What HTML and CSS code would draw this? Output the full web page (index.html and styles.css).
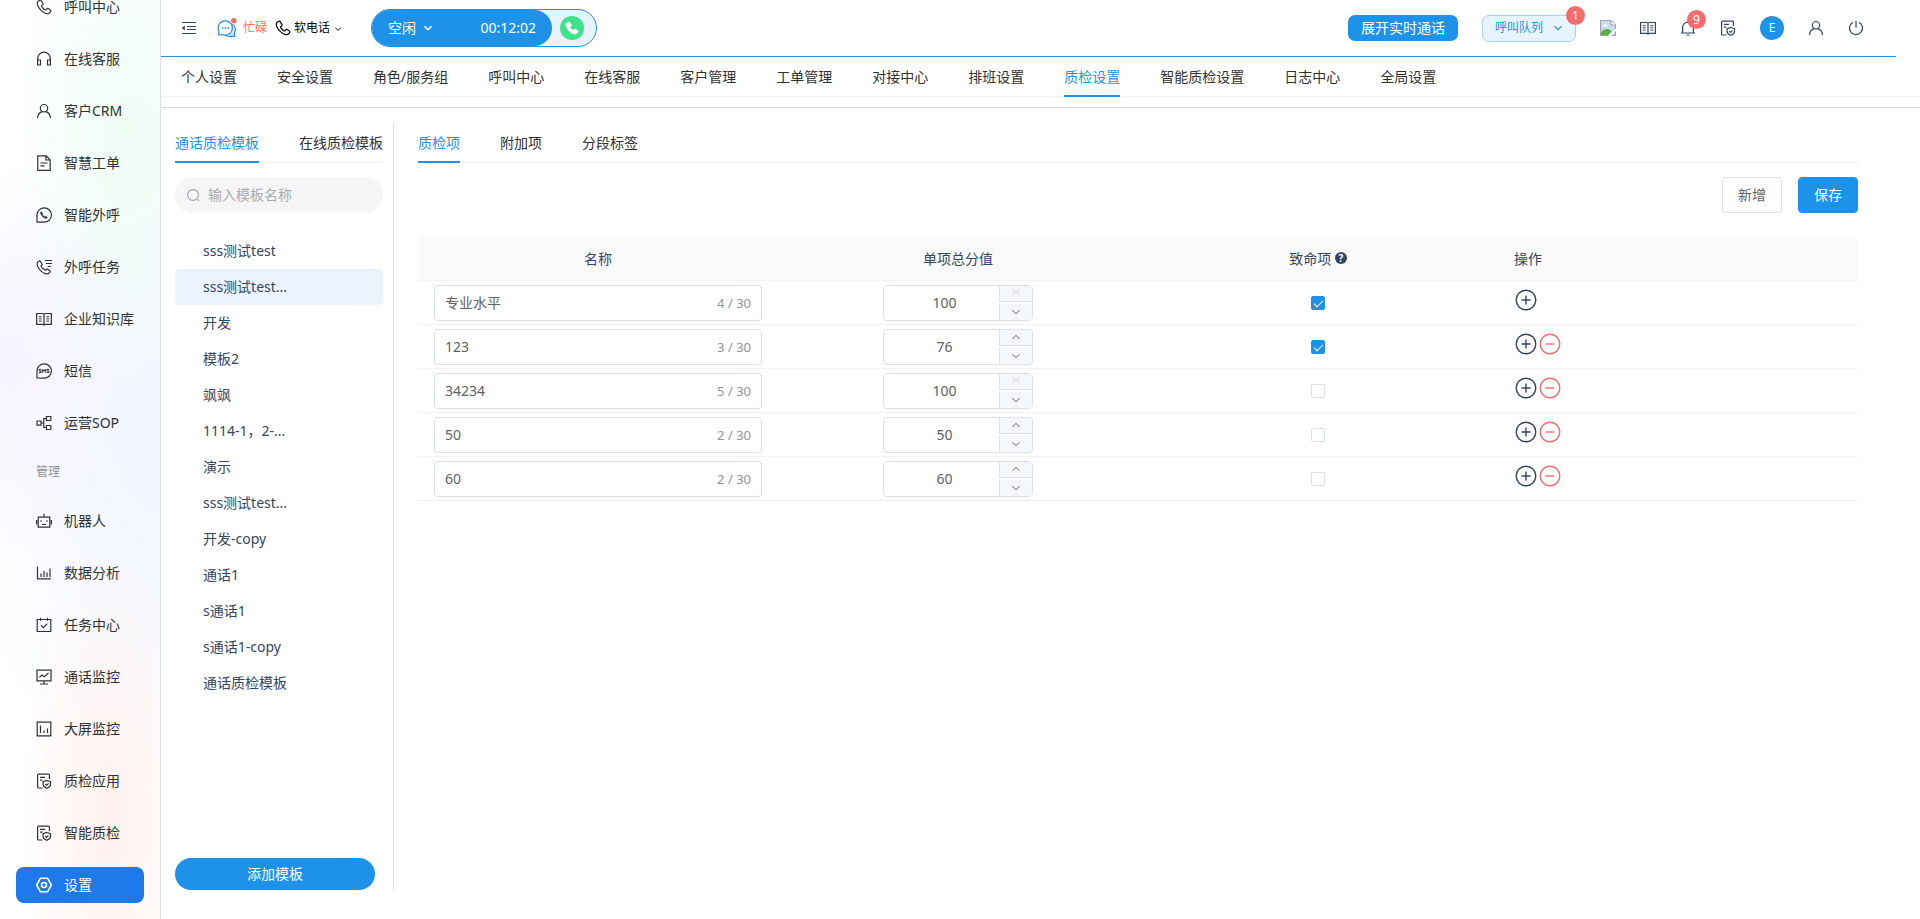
FILE: index.html
```html
<!DOCTYPE html>
<html lang="zh-CN">
<head>
  <meta charset="UTF-8">
  <title>质检设置</title>
  <meta name="viewport" content="width=device-width, initial-scale=1.0">
  <link rel="stylesheet" href="styles.css">
</head>
<body>
  <!-- 图标 -->
  <svg class="sprite" aria-hidden="true">
    <symbol id="i-phone" viewBox="0 0 16 16"><path d="M3.600 1.400 1.900 2.600C1 3.300 1.100 5 2 6.900c.8 1.700 2.100 3.500 3.700 5 1.500 1.400 3.300 2.500 5 2.800 1.300.2 2.400-.1 3.100-1l.8-1.100c.4-.5.3-1.100-.2-1.500l-2-1.500c-.5-.4-1.100-.3-1.500.2l-.7.9c-.3.3-.7.4-1.100.2C7.700 10.200 6.500 9 5.700 7.600c-.2-.4-.1-.8.2-1.100l.8-.6c.5-.4.6-1 .2-1.500L5.200 1.700c-.4-.5-1.100-.6-1.600-.3z"/></symbol>
    <symbol id="i-headset" viewBox="0 0 16 16"><path d="M1.600 14V7.600a6.400 6.400 0 0 1 12.800 0V14M1.600 9h2.900v5H1.600zM11.500 9h2.900v5h-2.900z"/></symbol>
    <symbol id="i-user" viewBox="0 0 16 16"><circle cx="8" cy="5.200" r="3.700"/><path d="M1.500 15c.2-3.300 2-5.500 4.500-6.400M14.500 15c-.2-3.300-2-5.500-4.500-6.400"/></symbol>
    <symbol id="i-file" viewBox="0 0 16 16"><path d="M1.800.8h8.500L14.200 5v10.300H1.800zM9.900.8V5h4.300M4.500 8h7M4.500 10.800h4"/></symbol>
    <symbol id="i-whats" viewBox="0 0 16 16"><path d="M1 15.200V8a7.200 7.200 0 1 1 7 7.200z"/><path d="m5.300 4.600-.8.900c.2 2.700 3.200 5.700 6 5.900l.9-.8-1.700-1.300-.9.500C7.500 9.400 6.800 8.700 6.200 7.400l.5-.9z" fill="currentColor" stroke-width=".6"/></symbol>
    <symbol id="i-calllist" viewBox="0 0 16 16"><path d="M9 1.500h7M9.800 4.500H16M11.800 7.500H15"/><path d="m3 2.200-1.300.9C.2 5 1.900 9 4.800 11.900c2.900 2.700 6.600 3.900 8.300 2.100l.9-1.100c.3-.4.2-.9-.2-1.200l-1.900-1.500c-.4-.3-.9-.2-1.200.2l-.7.7C8.100 10.900 5.500 8.600 5 6.900l.8-.7c.4-.3.5-.8.2-1.200L4.300 2.400C4 2 3.400 1.900 3 2.200z"/></symbol>
    <symbol id="i-book" viewBox="0 0 16 16"><path d="M.6 2.500h6L8 3.300l1.400-.8h6v10.800h-6l-1.400.8-1.400-.8h-6zM8 3.300v10.500"/><path d="M2.800 5.700h2.800M2.800 7.900h2.800M2.800 10.100h2.800M10.400 5.700h2.800M10.400 7.900h2.800M10.400 10.100h2.800" stroke-width="1"/></symbol>
    <symbol id="i-sms" viewBox="0 0 16 16"><path d="M1 15V8a7.200 7.200 0 1 1 7 7.200z"/><path d="M5.300 6.400H3.200v1.500h2v1.600H3M6.700 9.700V6.300L8 8.200l1.300-1.900v3.400M13 6.400h-2.100v1.500h2v1.600h-2.200" stroke-width="1"/></symbol>
    <symbol id="i-sop" viewBox="0 0 16 16"><path d="M1 6h4v4.200H1zM10.400 1.500h4.400v4h-4.400zM10.400 10.500h4.400v4h-4.400zM5 8h2.600M10.400 3.500H7.700v9h2.700"/></symbol>
    <symbol id="i-robot" viewBox="0 0 16 16"><path d="M2.200 4.200h11.600v10H2.200zM8 4V.8M.6 7v4.500M15.400 7v4.500M5 7.200v1.500M11 7.200v1.500M6 11.500h4"/></symbol>
    <symbol id="i-chart" viewBox="0 0 16 16"><path d="M1.500 1.500v12.300h13.300M5 12V8.500M8 12V6M11 12V7.500M14 12V3.500"/></symbol>
    <symbol id="i-task" viewBox="0 0 16 16"><path d="M1.200 2.500h13.600v12H1.200zM4.500.8v3M11.500.8v3M5 8.400l2.300 2.300 4-4"/></symbol>
    <symbol id="i-monitor" viewBox="0 0 16 16"><path d="M1 1.200h14v10.600H1zM8 12v3M4 15h8M3.500 8.300 6 6l2.300 1.800L12.500 4"/></symbol>
    <symbol id="i-screen" viewBox="0 0 16 16"><path d="M1.200 1.200h13.600v13.600H1.200zM4.500 4.500V12M8 9.500V12M11.500 7.500V12"/></symbol>
    <symbol id="i-check" viewBox="0 0 16 16"><path d="M6.500 15H2.500C1.900 15 1.600 14.700 1.600 14.100V2.100c0-.6.3-.9.900-.9h10c.6 0 .9.3.9.900V6M4 4.300h5M4 7.200h2.400"/><path d="m10.800 7.500 3.700 1.200v2.700c0 1.800-1.700 3.100-3.700 3.900-2-.8-3.700-2.100-3.700-3.900V8.700zM9.200 11.200l1.300 1.300 2-2.200"/></symbol>
    <symbol id="i-setting" viewBox="0 0 16 16"><path d="M4.500 1.200h7L15.300 8l-3.800 6.800h-7L.7 8z"/><circle cx="8" cy="8" r="2.500"/></symbol>
    <symbol id="i-fold" viewBox="0 0 16 16"><path d="M1 2.500h14M6 6.500h9M6 9.500h9M1 13.500h14"/><path d="M3.800 5.500v5L.8 8z" fill="currentColor" stroke="none"/></symbol>
    <symbol id="i-down" viewBox="0 0 10 10"><path d="m1.500 3.200 3.500 3.500 3.500-3.500"/></symbol>
    <symbol id="i-up" viewBox="0 0 10 10"><path d="M1.500 6.800 5 3.300l3.500 3.500"/></symbol>
    <symbol id="i-search" viewBox="0 0 14 14"><circle cx="6.500" cy="6.500" r="5.800"/><path d="m10.800 10.800 2.200 2.200"/></symbol>
    <symbol id="i-bell" viewBox="0 0 16 16"><path d="M.8 13h14.400M2.600 13V7.500a5.400 5.400 0 0 1 10.800 0V13M8 2V.8M6.500 15h3"/></symbol>
    <symbol id="i-power" viewBox="0 0 16 16"><path d="M5 2.300a6.500 6.500 0 1 0 6 0M8 .8v7"/></symbol>
    <symbol id="i-plus" viewBox="0 0 22 22"><circle cx="11" cy="11" r="9.800"/><path d="M11 6.500v9M6.500 11h9"/></symbol>
    <symbol id="i-minus" viewBox="0 0 22 22"><circle cx="11" cy="11" r="9.800"/><path d="M6.500 11h9"/></symbol>
  </svg>

  <!-- 左侧菜单 -->
  <aside class="sidebar">
    <a href="#" class="menu-item"><svg class="icon"><use href="#i-phone"/></svg>呼叫中心</a>
    <a href="#" class="menu-item"><svg class="icon"><use href="#i-headset"/></svg>在线客服</a>
    <a href="#" class="menu-item"><svg class="icon"><use href="#i-user"/></svg>客户CRM</a>
    <a href="#" class="menu-item"><svg class="icon"><use href="#i-file"/></svg>智慧工单</a>
    <a href="#" class="menu-item"><svg class="icon"><use href="#i-whats"/></svg>智能外呼</a>
    <a href="#" class="menu-item"><svg class="icon"><use href="#i-calllist"/></svg>外呼任务</a>
    <a href="#" class="menu-item"><svg class="icon"><use href="#i-book"/></svg>企业知识库</a>
    <a href="#" class="menu-item"><svg class="icon"><use href="#i-sms"/></svg>短信</a>
    <a href="#" class="menu-item"><svg class="icon"><use href="#i-sop"/></svg>运营SOP</a>
    <div class="menu-group">管理</div>
    <a href="#" class="menu-item"><svg class="icon"><use href="#i-robot"/></svg>机器人</a>
    <a href="#" class="menu-item"><svg class="icon"><use href="#i-chart"/></svg>数据分析</a>
    <a href="#" class="menu-item"><svg class="icon"><use href="#i-task"/></svg>任务中心</a>
    <a href="#" class="menu-item"><svg class="icon"><use href="#i-monitor"/></svg>通话监控</a>
    <a href="#" class="menu-item"><svg class="icon"><use href="#i-screen"/></svg>大屏监控</a>
    <a href="#" class="menu-item"><svg class="icon"><use href="#i-check"/></svg>质检应用</a>
    <a href="#" class="menu-item"><svg class="icon"><use href="#i-check"/></svg>智能质检</a>
    <a href="#" class="menu-item active"><svg class="icon"><use href="#i-setting"/></svg>设置</a>
  </aside>

  <div class="main">
    <!-- 顶部工具栏 -->
    <header class="header">
      <button class="icon-btn" aria-label="收起菜单"><svg class="icon"><use href="#i-fold"/></svg></button>
      <button class="status-btn">
        <svg class="chat-icon" viewBox="0 0 20 20">
          <path d="M12.500 5.500c3.400.3 5.900 2.900 5.900 6.200 0 1.500-.5 2.700-1.200 3.700l.6 3h-4.600c-2.200.3-4-.3-5.400-1.700" fill="#d5e9fb"/>
          <path d="M1.800 17v-4.200a7.100 7.100 0 1 1 3.800 3.700z" fill="#fff"/>
          <path d="M4.800 10h1.600M7.600 10h1.600M10.400 10h1.600" stroke-width="1.600"/>
          <circle cx="16.800" cy="2.700" r="2.700" fill="#ff6a5c" stroke="none"/>
        </svg>
        忙碌
      </button>
      <button class="phone-btn"><svg class="icon"><use href="#i-phone"/></svg>软电话<svg class="arrow"><use href="#i-down"/></svg></button>
      <div class="call-pill">
        <button class="call-state">空闲<svg class="arrow"><use href="#i-down"/></svg><span class="call-time">00:12:02</span></button>
        <button class="call-dial" aria-label="拨号"><svg class="icon"><use href="#i-phone"/></svg></button>
      </div>
      <div class="header-right">
        <button class="live-btn">展开实时通话</button>
        <button class="queue-btn">呼叫队列<svg class="arrow"><use href="#i-down"/></svg><span class="badge">1</span></button>
        <svg class="broken-img" viewBox="0 0 16 16">
          <path d="M.5.500h10.500l4.500 4.500v10.500H.5z" fill="#c9daf6" stroke="#a0a4a8"/>
          <path d="M11 .5V5h4.500" fill="#fff" stroke="#a0a4a8"/>
          <path d="M2.500 6.500c0-1.500 1-2 2-1.700.7-1 2.600-.7 2.700 1.700z" fill="#fff"/>
          <path d="M1 15v-2.500c2-3 4.500-4 7-3.500 2 .4 3 1.500 3.500 2.200L8 15z" fill="#57b13a"/>
          <path d="M8.500 16 16 8.500V11l-5 5z" fill="#fff"/>
        </svg>
        <button class="icon-btn" aria-label="知识库"><svg class="icon"><use href="#i-book"/></svg></button>
        <button class="icon-btn" aria-label="通知"><svg class="icon"><use href="#i-bell"/></svg><span class="badge">9</span></button>
        <button class="icon-btn" aria-label="质检"><svg class="icon"><use href="#i-check"/></svg></button>
        <a href="#" class="avatar">E</a>
        <button class="icon-btn" aria-label="我的"><svg class="icon"><use href="#i-user"/></svg></button>
        <button class="icon-btn" aria-label="退出"><svg class="icon"><use href="#i-power"/></svg></button>
      </div>
    </header>

    <nav class="tabs nav-tabs">
      <a href="#" class="tab">个人设置</a>
      <a href="#" class="tab">安全设置</a>
      <a href="#" class="tab">角色/服务组</a>
      <a href="#" class="tab">呼叫中心</a>
      <a href="#" class="tab">在线客服</a>
      <a href="#" class="tab">客户管理</a>
      <a href="#" class="tab">工单管理</a>
      <a href="#" class="tab">对接中心</a>
      <a href="#" class="tab">排班设置</a>
      <a href="#" class="tab active">质检设置</a>
      <a href="#" class="tab">智能质检设置</a>
      <a href="#" class="tab">日志中心</a>
      <a href="#" class="tab">全局设置</a>
    </nav>

    <div class="content">
      <!-- 模板列表 -->
      <section class="template-panel">
        <div class="tabs">
          <a href="#" class="tab active">通话质检模板</a>
          <a href="#" class="tab">在线质检模板</a>
        </div>
        <label class="search-box">
          <svg class="search-icon"><use href="#i-search"/></svg>
          <input type="text" placeholder="输入模板名称" aria-label="输入模板名称">
        </label>
        <div class="template-list">
          <a href="#" class="template-item">sss测试test</a>
          <a href="#" class="template-item active">sss测试test...</a>
          <a href="#" class="template-item">开发</a>
          <a href="#" class="template-item">模板2</a>
          <a href="#" class="template-item">飒飒</a>
          <a href="#" class="template-item">1114-1，2-...</a>
          <a href="#" class="template-item">演示</a>
          <a href="#" class="template-item">sss测试test...</a>
          <a href="#" class="template-item">开发-copy</a>
          <a href="#" class="template-item">通话1</a>
          <a href="#" class="template-item">s通话1</a>
          <a href="#" class="template-item">s通话1-copy</a>
          <a href="#" class="template-item">通话质检模板</a>
        </div>
        <button class="add-btn">添加模板</button>
      </section>

      <!-- 质检项 -->
      <section class="detail-panel">
        <div class="tabs">
          <a href="#" class="tab active">质检项</a>
          <a href="#" class="tab">附加项</a>
          <a href="#" class="tab">分段标签</a>
        </div>
        <div class="toolbar">
          <button class="btn">新增</button>
          <button class="btn primary">保存</button>
        </div>
        <table class="table">
          <thead>
            <tr>
              <th>名称</th>
              <th>单项总分值</th>
              <th>致命项 <span class="help">?</span></th>
              <th class="left">操作</th>
            </tr>
          </thead>
          <tbody>
            <tr>
              <td><div class="name-input"><input type="text" value="专业水平" aria-label="名称"><span>4 / 30</span></div></td>
              <td><div class="number-input"><input type="number" value="100" aria-label="单项总分值"><div class="steps"><button disabled aria-label="增加"><svg><use href="#i-up"/></svg></button><button aria-label="减少"><svg><use href="#i-down"/></svg></button></div></div></td>
              <td><input type="checkbox" class="checkbox" aria-label="致命项" checked></td>
              <td><div class="ops"><button class="op" aria-label="添加"><svg><use href="#i-plus"/></svg></button></div></td>
            </tr>
            <tr>
              <td><div class="name-input"><input type="text" value="123" aria-label="名称"><span>3 / 30</span></div></td>
              <td><div class="number-input"><input type="number" value="76" aria-label="单项总分值"><div class="steps"><button aria-label="增加"><svg><use href="#i-up"/></svg></button><button aria-label="减少"><svg><use href="#i-down"/></svg></button></div></div></td>
              <td><input type="checkbox" class="checkbox" aria-label="致命项" checked></td>
              <td><div class="ops"><button class="op" aria-label="添加"><svg><use href="#i-plus"/></svg></button><button class="op danger" aria-label="删除"><svg><use href="#i-minus"/></svg></button></div></td>
            </tr>
            <tr>
              <td><div class="name-input"><input type="text" value="34234" aria-label="名称"><span>5 / 30</span></div></td>
              <td><div class="number-input"><input type="number" value="100" aria-label="单项总分值"><div class="steps"><button disabled aria-label="增加"><svg><use href="#i-up"/></svg></button><button aria-label="减少"><svg><use href="#i-down"/></svg></button></div></div></td>
              <td><input type="checkbox" class="checkbox" aria-label="致命项"></td>
              <td><div class="ops"><button class="op" aria-label="添加"><svg><use href="#i-plus"/></svg></button><button class="op danger" aria-label="删除"><svg><use href="#i-minus"/></svg></button></div></td>
            </tr>
            <tr>
              <td><div class="name-input"><input type="text" value="50" aria-label="名称"><span>2 / 30</span></div></td>
              <td><div class="number-input"><input type="number" value="50" aria-label="单项总分值"><div class="steps"><button aria-label="增加"><svg><use href="#i-up"/></svg></button><button aria-label="减少"><svg><use href="#i-down"/></svg></button></div></div></td>
              <td><input type="checkbox" class="checkbox" aria-label="致命项"></td>
              <td><div class="ops"><button class="op" aria-label="添加"><svg><use href="#i-plus"/></svg></button><button class="op danger" aria-label="删除"><svg><use href="#i-minus"/></svg></button></div></td>
            </tr>
            <tr>
              <td><div class="name-input"><input type="text" value="60" aria-label="名称"><span>2 / 30</span></div></td>
              <td><div class="number-input"><input type="number" value="60" aria-label="单项总分值"><div class="steps"><button aria-label="增加"><svg><use href="#i-up"/></svg></button><button aria-label="减少"><svg><use href="#i-down"/></svg></button></div></div></td>
              <td><input type="checkbox" class="checkbox" aria-label="致命项"></td>
              <td><div class="ops"><button class="op" aria-label="添加"><svg><use href="#i-plus"/></svg></button><button class="op danger" aria-label="删除"><svg><use href="#i-minus"/></svg></button></div></td>
            </tr>
          </tbody>
        </table>
      </section>
    </div>
  </div>
</body>
</html>
```

FILE: styles.css
```css
* {
  box-sizing: border-box;
}
body {
  margin: 0;
  height: 100vh;
  display: flex;
  overflow: hidden;
  font-family: 'Noto Sans', 'Noto Sans CJK SC', sans-serif;
  font-size: 14px;
  line-height: 20px;
  color: #303133;
  background: #fff;
}
a {
  color: inherit;
  text-decoration: none;
}
button, input {
  font: inherit;
  color: inherit;
  margin: 0;
  padding: 0;
  border: 0;
  background: none;
}
button {
  cursor: pointer;
}
svg {
  display: block;
  flex: none;
  fill: none;
  stroke: currentColor;
  stroke-width: 1.2;
}
.sprite {
  position: absolute;
  width: 0;
  height: 0;
}
.icon {
  width: 16px;
  height: 16px;
}
.arrow {
  width: 10px;
  height: 10px;
}

/* 左侧菜单 */
.sidebar {
  width: 161px;
  height: 100%;
  flex: none;
  display: flex;
  flex-direction: column;
  justify-content: flex-end;
  gap: 16px;
  padding: 16px;
  overflow: hidden;
  border-right: 1px solid #dcdfe9;
  background:
    radial-gradient(ellipse 90px 280px at 110px 820px, #fff1ee, transparent),
    radial-gradient(ellipse 120px 260px at 130px 130px, #effdf5, transparent),
    radial-gradient(ellipse 130px 200px at 10px 360px, #f7f3ff, transparent),
    radial-gradient(ellipse 220px 360px at 160px 440px, #eff4ff, transparent),
    #fff;
}
.menu-item {
  height: 36px;
  flex: none;
  display: flex;
  align-items: center;
  gap: 12px;
  padding-left: 20px;
  border-radius: 8px;
}
.menu-item.active {
  background: #1e7aea;
  color: #fff;
}
.menu-item.active .icon {
  stroke-width: 1.6;
}
.menu-group {
  flex: none;
  padding-left: 20px;
  font-size: 12px;
  line-height: 30px;
  color: #909399;
}

.main {
  flex: 1;
  min-width: 0;
  display: flex;
  flex-direction: column;
}

/* 顶部工具栏 */
.header {
  height: 57px;
  flex: none;
  display: flex;
  align-items: center;
  margin-right: 24px;
  padding: 0 32px 0 20px;
  border-bottom: 1px solid #1e92e9;
}
.icon-btn {
  position: relative;
  color: #344563;
}
.status-btn {
  display: flex;
  align-items: center;
  gap: 6px;
  margin: 0 8px 0 20px;
  font-size: 12px;
  color: #ff6a5c;
}
.chat-icon {
  width: 20px;
  height: 20px;
  stroke: #2b8ae6;
}
.phone-btn {
  display: flex;
  align-items: center;
  gap: 3px;
  font-size: 12px;
  color: #000;
}
.phone-btn .arrow {
  width: 8px;
  height: 8px;
  margin: 2px 0 0 1px;
}
.call-pill {
  display: flex;
  height: 38px;
  margin-left: 29px;
  border: 1px solid #1e92e9;
  border-radius: 19px;
  background: #e6f3fd;
}
.call-state {
  width: 180px;
  display: flex;
  align-items: center;
  gap: 7px;
  padding: 0 16px;
  border-radius: 18px;
  background: #1e92e9;
  color: #fff;
}
.call-state .arrow {
  stroke-width: 1.6;
}
.call-time {
  margin-left: auto;
}
.call-dial {
  width: 24px;
  height: 24px;
  display: flex;
  align-items: center;
  justify-content: center;
  align-self: center;
  margin: 0 12px 0 8px;
  border-radius: 50%;
  background: #3be38a;
  color: #fff;
}
.call-dial .icon {
  width: 14px;
  height: 14px;
  fill: #fff;
}
.header-right {
  display: flex;
  align-items: center;
  gap: 24px;
  margin-left: auto;
}
.live-btn {
  height: 26px;
  padding: 0 13px;
  border-radius: 7px;
  background: #1e92e9;
  color: #fff;
}
.queue-btn {
  position: relative;
  height: 27px;
  display: flex;
  align-items: center;
  gap: 10px;
  padding: 0 12px;
  border: 1px solid #a5d3f6;
  border-radius: 7px;
  background: #e8f4fd;
  font-size: 12px;
  color: #1e92e9;
}
.badge {
  position: absolute;
  top: -10px;
  right: -10px;
  width: 19px;
  height: 19px;
  border-radius: 50%;
  background: #f56c6c;
  color: #fff;
  font-size: 12px;
  line-height: 19px;
  text-align: center;
}
.broken-img {
  width: 16px;
  height: 16px;
  stroke: none;
}
.avatar {
  width: 24px;
  height: 24px;
  border-radius: 50%;
  background: #1e92e9;
  color: #fff;
  font-size: 12px;
  line-height: 24px;
  text-align: center;
}

/* 标签页 */
.tabs {
  height: 40px;
  flex: none;
  display: flex;
  gap: 40px;
  box-shadow: inset 0 -1px #eff0f2;
}
.tab {
  line-height: 40px;
  white-space: nowrap;
}
.tab.active {
  color: #1e92e9;
  box-shadow: inset 0 -2px #1e92e9;
}
.nav-tabs {
  padding-left: 20px;
}

.content {
  flex: 1;
  display: flex;
  margin-top: 10px;
  padding: 15px 62px 29px 14px;
  border-top: 1px solid #dcdcdc;
}

/* 模板列表 */
.template-panel {
  width: 219px;
  flex: none;
  display: flex;
  flex-direction: column;
  padding-right: 10px;
  border-right: 1px solid #dfe1e6;
}
.search-box {
  height: 36px;
  display: flex;
  align-items: center;
  gap: 8px;
  margin: 14px 0 20px;
  padding: 0 12px;
  border-radius: 18px;
  background: #f6f6f6;
}
.search-icon {
  width: 13px;
  height: 13px;
  color: #a0a3a9;
}
.search-box input {
  flex: 1;
  min-width: 0;
  outline: none;
}
.search-box input::placeholder {
  color: #a8abb2;
}
.template-item {
  display: block;
  padding-left: 28px;
  border-radius: 4px;
  line-height: 36px;
  color: #344563;
}
.template-item.active {
  background: #eaf3ff;
}
.add-btn {
  height: 32px;
  margin: auto 8px 0 0;
  border-radius: 16px;
  background: #1e92e9;
  color: #fff;
}

/* 质检项 */
.detail-panel {
  flex: 1;
  min-width: 0;
  margin-left: 24px;
}
.toolbar {
  display: flex;
  justify-content: flex-end;
  gap: 16px;
  margin: 14px 0 24px;
}
.btn {
  width: 60px;
  height: 36px;
  border: 1px solid #dcdfe6;
  border-radius: 4px;
  color: #606266;
}
.btn.primary {
  border-color: #1e92e9;
  background: #1e92e9;
  color: #fff;
}
.table {
  width: 100%;
  table-layout: fixed;
  border-collapse: separate;
  border-spacing: 0;
  color: #344563;
}
.table th, .table td {
  height: 44px;
  padding: 0 16px;
  border-bottom: 1px solid #f2f3f5;
  text-align: center;
}
.table th {
  font-weight: normal;
  background: #fafafa;
}
.table th.left {
  text-align: left;
}
.table tr:last-child td {
  border-color: #ebeef5;
}
.help {
  display: inline-block;
  width: 12px;
  height: 12px;
  border-radius: 50%;
  background: #344563;
  color: #fff;
  font-size: 10px;
  font-weight: bold;
  line-height: 12px;
  text-align: center;
  vertical-align: 2px;
}
.name-input, .number-input {
  height: 36px;
  display: flex;
  align-items: center;
  border: 1px solid #dcdfe6;
  border-radius: 4px;
  overflow: hidden;
  color: #606266;
}
.name-input {
  padding: 0 10px;
}
.name-input input, .number-input input {
  flex: 1;
  min-width: 0;
  outline: none;
}
.name-input span {
  font-size: 13px;
  color: #909399;
}
.number-input {
  width: 150px;
  margin: 0 auto;
}
.number-input input {
  padding-left: 6px;
  text-align: center;
  appearance: textfield;
}
.number-input input::-webkit-inner-spin-button {
  appearance: none;
}
.steps {
  width: 33px;
  height: 34px;
  display: flex;
  flex-direction: column;
  justify-content: space-between;
}
.steps button {
  height: 16px;
  display: flex;
  align-items: center;
  justify-content: center;
  border-left: 1px solid #dcdfe6;
  background: #f5f7fa;
}
.steps button:first-child {
  border-bottom: 1px solid #dcdfe6;
}
.steps button:disabled {
  color: #c0c4cc;
}
.steps svg {
  width: 10px;
  height: 10px;
  stroke-width: 1;
}
.checkbox {
  appearance: none;
  display: block;
  width: 14px;
  height: 14px;
  margin: 0 auto;
  border: 1px solid #dcdfe6;
  border-radius: 2px;
  background: #fff;
}
.checkbox:checked {
  border-color: #1e92e9;
  background: #1e92e9;
}
.checkbox:checked::after {
  content: '';
  display: block;
  width: 4px;
  height: 8px;
  margin: 1px 4px;
  border: solid #fff;
  border-width: 0 1px 1px 0;
  transform: rotate(45deg);
}
.ops {
  display: flex;
  gap: 2px;
  padding: 0 0 5px 1px;
}
.op svg {
  width: 22px;
  height: 22px;
  stroke-width: 1.4;
}
.op.danger {
  color: #f56c6c;
}
```
